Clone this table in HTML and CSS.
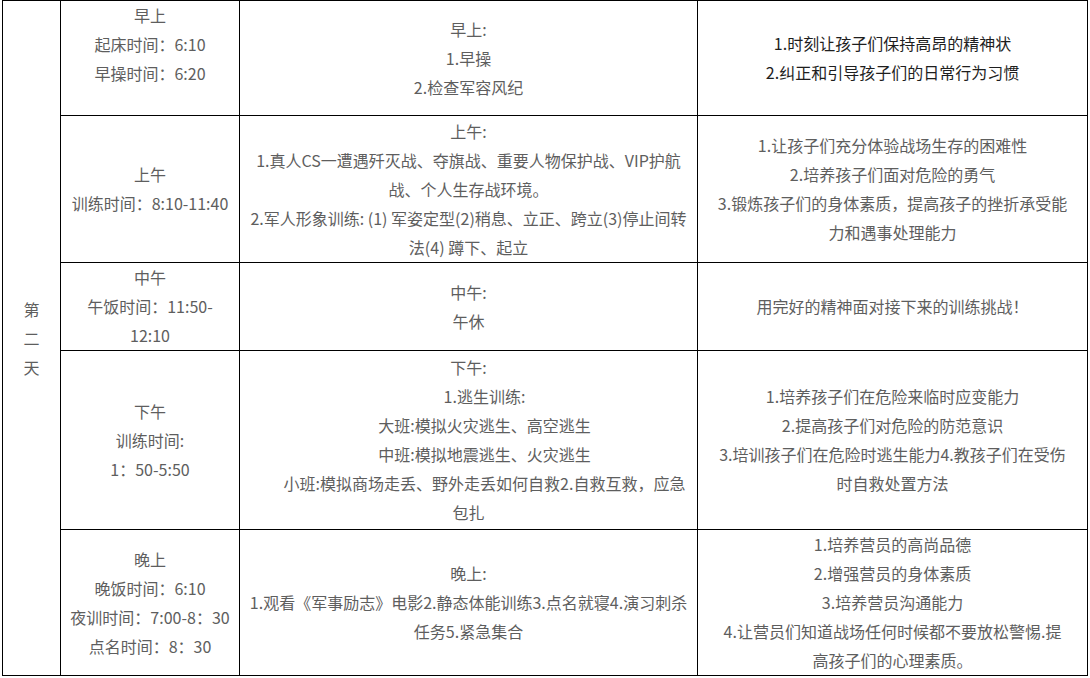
FILE: index.html
```html
<!DOCTYPE html>
<html lang="zh-CN">
<head>
<meta charset="utf-8">
<title>第二天</title>
<link rel="stylesheet" href="styles.css">
</head>
<body>
<table class="schedule">
  <colgroup>
    <col class="c-day">
    <col class="c-time">
    <col class="c-act">
    <col class="c-goal">
  </colgroup>
  <tbody>
    <tr class="r1">
      <td class="day" rowspan="5"><p>第<br>二<br>天</p></td>
      <td class="top"><p>早上</p><p>起床时间：6:10</p><p>早操时间：6:20</p></td>
      <td><p>早上:</p><p>1.早操</p><p>2.检查军容风纪</p></td>
      <td class="dark"><p>1.时刻让孩子们保持高昂的精神状</p><p>2.纠正和引导孩子们的日常行为习惯</p></td>
    </tr>
    <tr class="r2">
      <td><p>上午</p><p>训练时间：8:10-11:40</p></td>
      <td><p>上午:</p><p>1.真人CS一遭遇歼灭战、夺旗战、重要人物保护战、VIP护航<br>战、个人生存战环境。</p><p>2.军人形象训练: (1) 军姿定型(2)稍息、立正、跨立(3)停止间转<br>法(4) 蹲下、起立</p></td>
      <td><p>1.让孩子们充分体验战场生存的困难性</p><p>2.培养孩子们面对危险的勇气</p><p>3.锻炼孩子们的身体素质，提高孩子的挫折承受能<br>力和遇事处理能力</p></td>
    </tr>
    <tr class="r3">
      <td><p>中午</p><p>午饭时间：11:50-<br>12:10</p></td>
      <td><p>中午:</p><p>午休</p></td>
      <td><p>用完好的精神面对接下来的训练挑战！</p></td>
    </tr>
    <tr class="r4">
      <td><p>下午</p><p>训练时间:</p><p>1：50-5:50</p></td>
      <td><p>下午:</p><p class="ind">1.逃生训练:</p><p class="ind">大班:模拟火灾逃生、高空逃生</p><p class="ind">中班:模拟地震逃生、火灾逃生</p><p><span class="ind">小班:模拟商场走丢、野外走丢如何自救2.自救互救，应急</span><br>包扎</p></td>
      <td><p>1.培养孩子们在危险来临时应变能力</p><p>2.提高孩子们对危险的防范意识</p><p>3.培训孩子们在危险时逃生能力4.教孩子们在受伤<br>时自救处置方法</p></td>
    </tr>
    <tr class="r5">
      <td><p>晚上</p><p>晚饭时间：6:10</p><p>夜训时间：7:00-8：30</p><p>点名时间：8：30</p></td>
      <td><p>晚上:</p><p>1.观看《军事励志》电影2.静态体能训练3.点名就寝4.演习刺杀<br>任务5.紧急集合</p></td>
      <td><p>1.培养营员的高尚品德</p><p>2.增强营员的身体素质</p><p>3.培养营员沟通能力</p><p>4.让营员们知道战场任何时候都不要放松警惕.提<br>高孩子们的心理素质。</p></td>
    </tr>
  </tbody>
</table>
</body>
</html>
```

FILE: styles.css
```css
html, body {
  margin: 0;
  padding: 0;
  background: #ffffff;
}

body {
  font-family: "Noto Sans CJK SC", "Microsoft YaHei", sans-serif;
  font-size: 16px;
  color: #5e5e5e;
}

.schedule {
  margin-left: 2px;
  width: 1085px;
  border-collapse: collapse;
  table-layout: fixed;
}

.c-day { width: 58px; }
.c-time { width: 179px; }
.c-act { width: 458px; }
.c-goal { width: 390px; }

.schedule td {
  border: 1px solid #000000;
  padding: 0 6px;
  text-align: center;
  vertical-align: middle;
}

.schedule td.top {
  vertical-align: top;
}

.schedule p {
  margin: 0;
  line-height: 29px;
  white-space: nowrap;
}

.schedule td.day {
  padding: 0;
}

.schedule td.dark {
  color: #1e1e1e;
}

.ind {
  padding-left: 32px;
}

.r1 { height: 115px; }
.r2 { height: 147px; }
.r3 { height: 88px; }
.r4 { height: 179px; }
.r5 { height: 146px; }
```
